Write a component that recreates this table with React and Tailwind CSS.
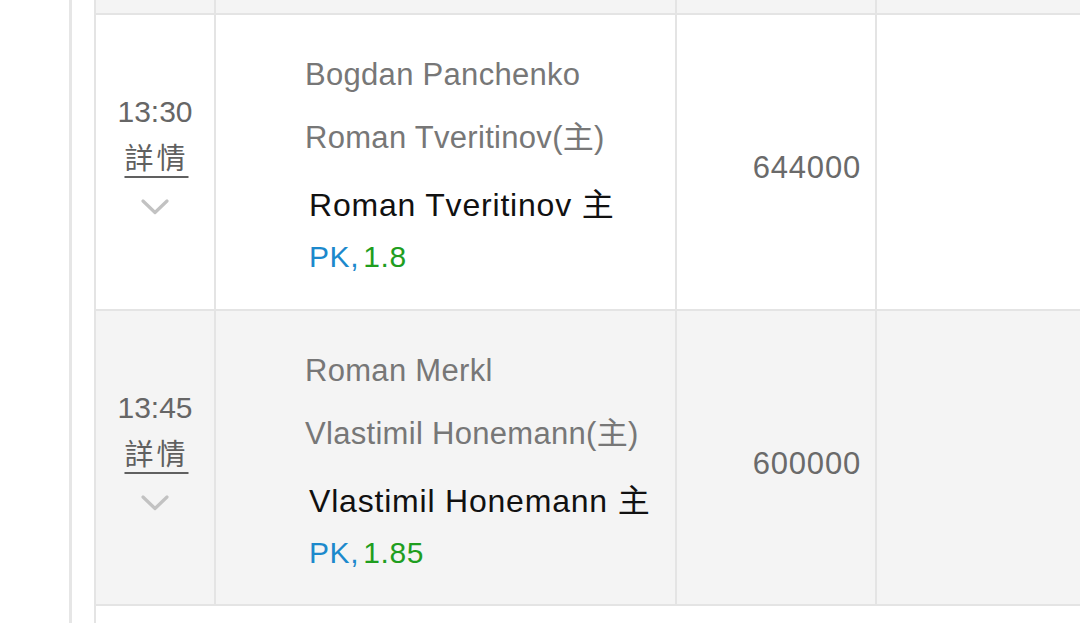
import React from "react";

const rows = [
  {
    time: "13:30",
    home: "Bogdan Panchenko",
    away: "Roman Tveritinov(主)",
    pick: "Roman Tveritinov 主",
    odds: "1.8",
    amount: "644000",
    bg: "bg-white",
    h: "h-[296px]",
  },
  {
    time: "13:45",
    home: "Roman Merkl",
    away: "Vlastimil Honemann(主)",
    pick: "Vlastimil Honemann 主",
    odds: "1.85",
    amount: "600000",
    bg: "bg-[#f4f4f4]",
    h: "h-[295px]",
  },
];

function Chevron() {
  return (
    <svg width="28" height="16" viewBox="0 0 28 16" className="block">
      <polyline
        points="2,2 14,13.5 26,2"
        fill="none"
        stroke="#c2c2c2"
        strokeWidth="3.2"
        strokeLinecap="round"
        strokeLinejoin="round"
      />
    </svg>
  );
}

function Row({ r }) {
  return (
    <div className={`grid grid-cols-[120px_461px_200px_1fr] ${r.h} ${r.bg} border-b-2 border-[#e4e4e4]`}>
      <div className="flex flex-col items-center border-r-2 border-[#e4e4e4] pt-[79px]">
        <div className="text-[30px] leading-[36px] text-[#666666]">{r.time}</div>
        <div className="mt-[11px] text-[29px] leading-[36px] tracking-[3px] pl-[3px] text-[#606060] underline underline-offset-[7px] decoration-[1.5px]">
          詳情
        </div>
        <div className="mt-[22px]">
          <Chevron />
        </div>
      </div>
      <div className="flex flex-col border-r-2 border-[#e4e4e4] pl-[89px] pt-[42px]">
        <div className="text-[31px] leading-[36px] tracking-[0.3px] text-[#777777] whitespace-nowrap">{r.home}</div>
        <div className="mt-[27px] text-[31px] leading-[36px] tracking-[0.3px] text-[#777777] whitespace-nowrap">{r.away}</div>
        <div className="mt-[31px] pl-[4px] text-[32px] leading-[36px] tracking-[0.8px] text-[#111111] whitespace-nowrap">{r.pick}</div>
        <div className="mt-[16px] pl-[4px] text-[30px] leading-[36px] tracking-[0.6px] whitespace-nowrap">
          <span className="text-[#1c89cc]">PK,</span>
          <span className="ml-[4px] text-[#1f9e1f]">{r.odds}</span>
        </div>
      </div>
      <div className="flex items-center justify-end border-r-2 border-[#e4e4e4] pr-[14px]">
        <div className="text-[31px] leading-[36px] tracking-[0.8px] text-[#6a6a6a] pt-[12px]">{r.amount}</div>
      </div>
      <div />
    </div>
  );
}

export default function App() {
  return (
    <div
      className="w-[1080px] h-[623px] overflow-hidden bg-white flex"
      style={{ fontFamily: "'Liberation Sans', 'Noto Sans CJK TC', sans-serif" }}
    >
      <div className="w-[69px] shrink-0" />
      <div className="w-[3px] shrink-0 bg-[#e6e6e6]" />
      <div className="w-[22px] shrink-0" />
      <div className="flex-1 flex flex-col border-l-2 border-[#e4e4e4]">
        <div className="grid grid-cols-[120px_461px_200px_1fr] h-[15px] bg-[#f4f4f4] border-b-2 border-[#e4e4e4]">
          <div className="border-r-2 border-[#e4e4e4]" />
          <div className="border-r-2 border-[#e4e4e4]" />
          <div className="border-r-2 border-[#e4e4e4]" />
          <div />
        </div>
        {rows.map((r) => (
          <Row key={r.time} r={r} />
        ))}
        <div className="flex-1 bg-white" />
      </div>
    </div>
  );
}
